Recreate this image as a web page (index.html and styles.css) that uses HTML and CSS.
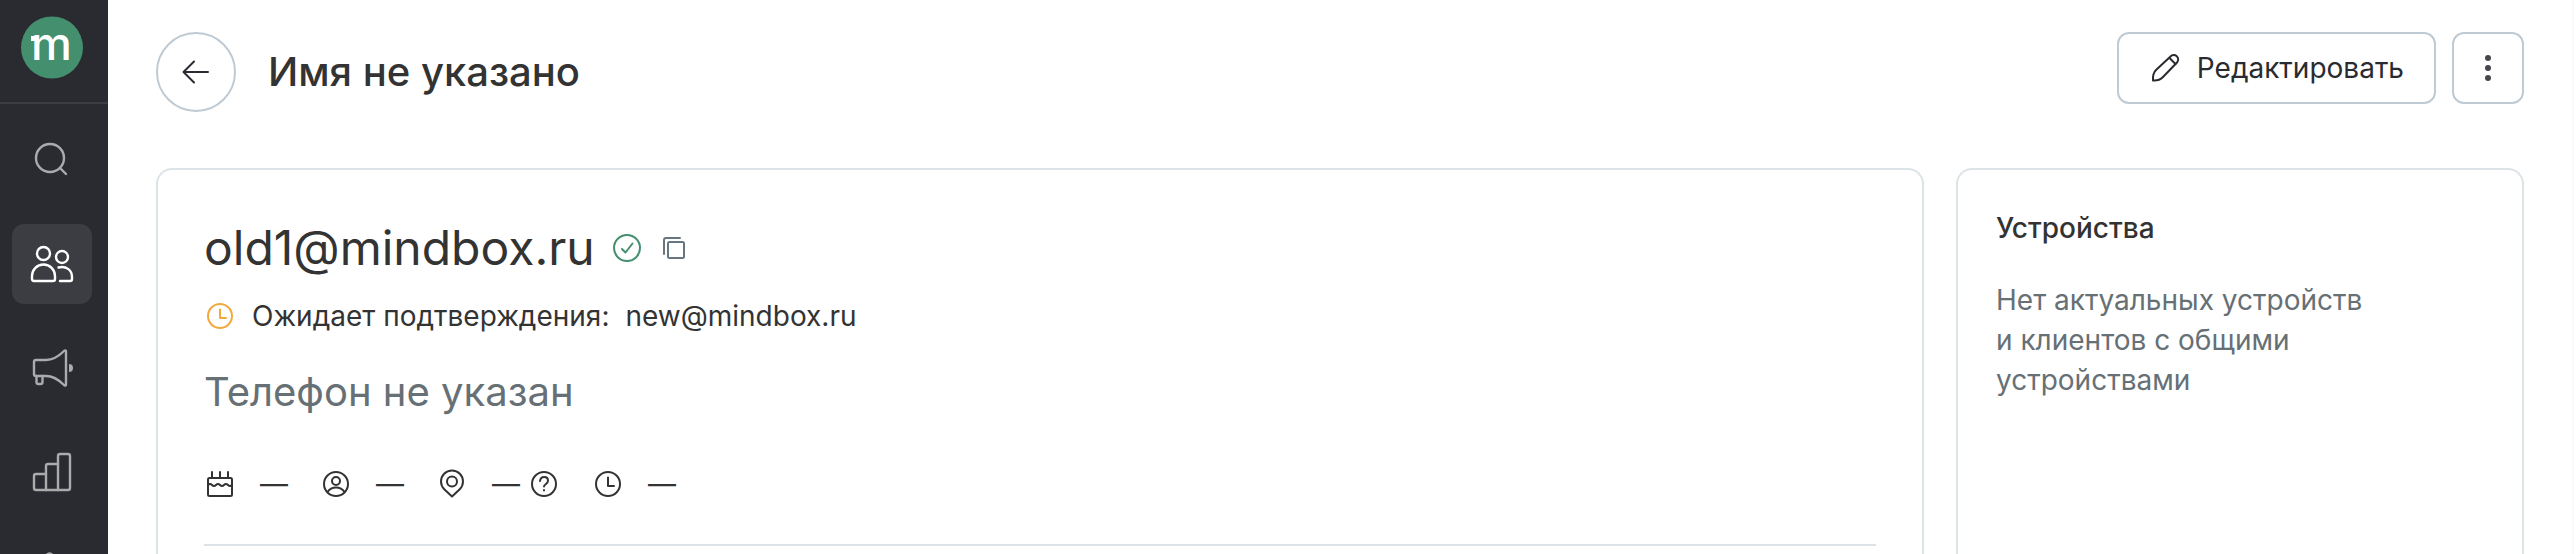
FILE: index.html
```html
<!DOCTYPE html>
<html lang="ru">
<head>
<meta charset="utf-8">
<title>Имя не указано</title>
<link rel="stylesheet" href="styles.css">
</head>
<body>
<div class="app">
  <nav class="sidebar" aria-label="Разделы">
    <a class="logo" href="#" aria-label="Mindbox">
      <svg width="62" height="62" viewBox="0 0 62 62">
        <circle cx="31" cy="31.500" r="31" fill="#438f6e"/>
        <rect x="10" y="20" width="6" height="5" fill="#fff"/>
        <text class="logo-letter" x="10" y="44">m</text>
      </svg>
    </a>
    <div class="nav-list">
      <a class="nav-item" href="#" aria-label="Поиск">
        <svg class="nav-icon" viewBox="0 0 48 48"><circle cx="22" cy="22" r="14"/><path d="M32 32l6 6"/></svg>
      </a>
      <a class="nav-item nav-item-active" href="#" aria-label="Клиенты" aria-current="page">
        <svg class="nav-icon" viewBox="0 0 48 48"><circle cx="15.500" cy="13.500" r="6.500"/><path d="M6 41q-2 0-2-2v-3a11.500 11.500 0 0 1 23 0v3q0 2-2 2z"/><circle cx="34" cy="17" r="6"/><path d="M30.500 27.500C38 25.500 44 30 44 37v2q0 2-2 2H32"/></svg>
      </a>
      <a class="nav-item" href="#" aria-label="Кампании">
        <svg class="nav-icon" viewBox="0 0 48 48"><path d="M8 16h10c7 0 14-5 18-9q2-1.500 2 .500v33q0 2-2 .500c-4-4-11-9-18-9H8q-2 0-2-2V18q0-2 2-2z"/><path d="M8.500 32v6q0 2 2 2h2q2 0 2-2v-6"/><path class="nav-dot" d="M41 20a4 4 0 0 1 0 8z"/></svg>
      </a>
      <a class="nav-item" href="#" aria-label="Отчёты">
        <svg class="nav-icon" viewBox="0 0 48 48"><path d="M18 42H8q-2 0-2-2V28q0-2 2-2h10z"/><path d="M18 26v-8q0-2 2-2h10v26H18"/><path d="M30 16V8q0-2 2-2h8q2 0 2 2v32q0 2-2 2H30"/></svg>
      </a>
      <a class="nav-item" href="#" aria-label="Настройки">
        <svg class="nav-icon" viewBox="0 0 48 48"><path d="M4 18 19 3q3-3 6 0l15 15v22H4z" transform="translate(-.5 0)"/></svg>
      </a>
    </div>
  </nav>

  <main class="content">
    <header class="page-header">
      <button class="back" type="button" aria-label="Назад">
        <svg class="icon" viewBox="0 0 32 32"><path d="M28 16H4M14 5.500 3.500 16 14 26.500"/></svg>
      </button>
      <h1 class="page-title">Имя не указано</h1>
      <div class="actions">
        <button class="button" type="button">
          <svg class="icon" viewBox="0 0 32 32"><path d="M4 28.500q-.500-7 3-10.500L21.500 4.500a4.400 4.400 0 0 1 6.500 6L14 25q-4 4-10 3.500z"/><path d="M20.500 6l6 6"/></svg>
          Редактировать
        </button>
        <button class="button button-square" type="button" aria-label="Ещё">
          <svg class="icon" viewBox="0 0 32 32"><g fill="#46474c" stroke="none"><circle cx="16" cy="6" r="3"/><circle cx="16" cy="16" r="3"/><circle cx="16" cy="26" r="3"/></g></svg>
        </button>
      </div>
    </header>

    <div class="cards">
      <section class="card profile">
        <div class="email-row">
          <span>old1@mindbox.ru</span>
          <svg class="icon icon-confirmed" viewBox="0 0 32 32"><circle cx="16" cy="16" r="13"/><path d="M11 17l3.500 3.500 7-9"/></svg>
          <button class="copy" type="button" aria-label="Скопировать">
            <svg class="icon" viewBox="0 0 32 32"><rect x="9" y="10" width="16" height="16" rx="1.500"/><path d="M5 22V8q0-2 2-2h14"/></svg>
          </button>
        </div>
        <div class="pending-row">
          <svg class="icon icon-pending" viewBox="0 0 32 32"><circle cx="16" cy="16" r="12"/><path d="M16 9.500V18h6"/></svg>
          <span>Ожидает подтверждения:</span>
          <span>new@mindbox.ru</span>
        </div>
        <div class="phone-row">Телефон не указан</div>
        <div class="meta-row">
          <div class="meta">
            <svg class="icon" viewBox="0 0 32 32"><rect x="4" y="10" width="24" height="18" rx="1.500"/><path d="M8 10V4M16 10V4M24 10V4M4 17q2-2 4 0t4 0 4 0 4 0 4 0 4 0"/></svg>
            <span>—</span>
          </div>
          <div class="meta">
            <svg class="icon" viewBox="0 0 32 32"><circle cx="16" cy="16" r="12"/><circle cx="16" cy="13" r="4"/><path d="M7.500 24q3-4.500 8.500-4.500t8.500 4.500"/></svg>
            <span>—</span>
          </div>
          <div class="meta">
            <svg class="icon" viewBox="0 0 32 32"><path d="M16 28.500l-7.500-7a11 11 0 1 1 15 0z"/><circle cx="16" cy="13.500" r="5"/></svg>
            <div class="meta-value">
              <span>—</span>
              <svg class="icon" viewBox="0 0 32 32"><circle cx="16" cy="16" r="12"/><path d="M12 13q.500-4 4.200-4t3.800 3.500q0 2-2 3.500t-2 2.500M16 22v.500"/></svg>
            </div>
          </div>
          <div class="meta">
            <svg class="icon" viewBox="0 0 32 32"><circle cx="16" cy="16" r="12"/><path d="M16 9.500V18h6"/></svg>
            <span>—</span>
          </div>
        </div>
        <hr class="divider">
      </section>

      <aside class="card devices">
        <h2 class="card-title">Устройства</h2>
        <p class="card-text">Нет актуальных устройств и&nbsp;клиентов с&nbsp;общими устройствами</p>
      </aside>
    </div>
  </main>
</div>
</body>
</html>
```
FILE: styles.css
```css
* {
  box-sizing: border-box;
}

body {
  margin: 0;
  background: #fff;
  color: #333;
  font: 400 28px/40px Inter, "Noto Sans", sans-serif;
}

h1,
h2,
p {
  margin: 0;
  font-weight: 500;
}

.app {
  display: flex;
  height: 100vh;
  overflow: hidden;
  border-right: 2px solid #fafafa;
}

.sidebar {
  flex: none;
  width: 108px;
  background: #2a2b30;
}

.logo {
  display: flex;
  height: 104px;
  padding: 16px 21px;
  border-bottom: 2px solid #3b3d42;
}

.logo svg {
  overflow: visible;
}

.logo-letter {
  fill: #fff;
  font: 500 46px Inter, sans-serif;
}

.nav-list {
  display: flex;
  flex-direction: column;
  gap: 24px;
  padding: 16px 12px;
}

.nav-item {
  display: flex;
  flex: none;
  align-items: center;
  justify-content: center;
  width: 80px;
  height: 80px;
  border-radius: 12px;
  color: #aaabad;
}

.nav-item-active {
  background: #3b3d42;
  color: #fff;
}

.nav-icon {
  width: 48px;
  height: 48px;
  fill: none;
  stroke: currentColor;
  stroke-width: 2.4;
  stroke-linecap: round;
  stroke-linejoin: round;
}

.nav-dot {
  fill: currentColor;
  stroke: none;
}

.content {
  display: flex;
  flex: 1;
  flex-direction: column;
  min-width: 0;
  padding: 32px 48px 0;
}

.page-header {
  display: flex;
  align-items: flex-start;
  margin-bottom: 56px;
}

.page-title {
  flex: 1;
  padding-left: 32px;
  font-size: 40px;
  line-height: 80px;
}

.icon {
  flex: none;
  width: 32px;
  height: 32px;
  fill: none;
  stroke: currentColor;
  stroke-width: 2;
  stroke-linecap: round;
  stroke-linejoin: round;
}

.back,
.button {
  display: flex;
  align-items: center;
  justify-content: center;
  border: 2px solid #bfcad3;
  background: #fff;
  color: #2a2b30;
  font: inherit;
}

.back {
  width: 80px;
  height: 80px;
  padding: 0;
  border-radius: 50%;
}

.actions {
  display: flex;
  gap: 16px;
}

.button {
  gap: 16px;
  height: 72px;
  padding: 0 30px;
  border-radius: 12px;
}

.button-square {
  width: 72px;
  padding: 0;
}

.cards {
  display: grid;
  flex: 1;
  grid-template-columns: minmax(0, 1fr) minmax(0, 568px);
  gap: 32px;
}

.card {
  border: 2px solid #dce3e7;
  border-bottom: 0;
  border-radius: 16px 16px 0 0;
}

.profile {
  padding: 46px 46px 0;
}

.email-row {
  display: flex;
  align-items: center;
  gap: 16px;
  font-size: 48px;
  line-height: 64px;
}

.icon-confirmed {
  color: #438f6e;
}

.copy {
  display: flex;
  padding: 0;
  border: 0;
  background: none;
  color: #667680;
}

.pending-row {
  display: flex;
  align-items: center;
  gap: 16px;
  margin-top: 16px;
}

.icon-pending {
  color: #f2a93b;
}

.phone-row {
  margin-top: 32px;
  color: #667075;
  font-size: 40px;
  line-height: 48px;
}

.meta-row {
  display: flex;
  gap: 32px;
  margin-top: 48px;
}

.meta {
  display: flex;
  align-items: center;
  gap: 24px;
}

.meta-value {
  display: flex;
  align-items: center;
  gap: 8px;
}

.divider {
  margin: 40px 0 0;
  border: 0;
  border-top: 2px solid #dce3e7;
}

.devices {
  padding: 38px;
}

.card-title {
  font-size: 28px;
}

.card-text {
  max-width: 400px;
  margin-top: 32px;
  color: #667075;
  font-weight: 400;
}
```
